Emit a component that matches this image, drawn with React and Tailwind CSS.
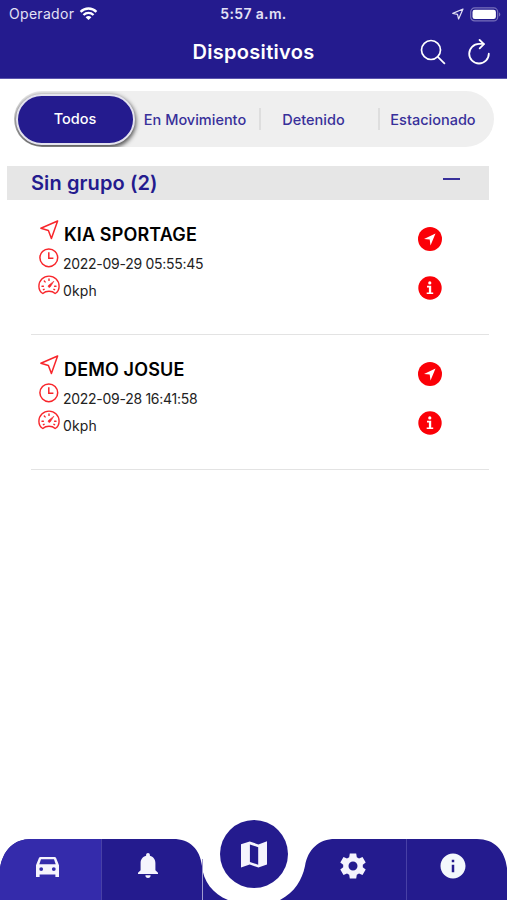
import { useState } from 'react';
import { MdInfo } from 'react-icons/md';

const devices = [
  { id: 1, name: 'KIA SPORTAGE', date: '2022-09-29 05:55:45', speed: '0kph' },
  { id: 2, name: 'DEMO JOSUE', date: '2022-09-28 16:41:58', speed: '0kph' },
];

const tabs = [
  { label: 'Todos', className: 'w-[122px]' },
  { label: 'En Movimiento', className: 'w-[119px] pr-[1px]' },
  { label: 'Detenido', className: 'w-[119px] pr-[2px]' },
  { label: 'Estacionado', className: 'w-[120px] pr-[2px]' },
];

function StatusBar() {
  return (
    <div className="flex h-7 items-center justify-between pl-[9px] pr-[6px] text-sm text-[#e3e1f5]">
      <div className="flex w-[110px] items-center gap-[5px]">
        <span className="text-[14px] tracking-[0.3px]">Operador</span>
        <svg className="h-[14px] w-[19px] shrink-0" viewBox="0 0 19 15" fill="none" stroke="#fff" strokeWidth="2.5">
          <path d="M1 5.2C5.9.4 13.1.4 18 5.2" />
          <path d="M4.1 8.6c3.1-3 7.7-3 10.8 0" />
          <path d="M9.5 14 6.4 10.9c1.8-1.7 4.4-1.7 6.2 0z" fill="#fff" stroke="none" />
        </svg>
      </div>
      <span className="pr-px text-[14px] font-semibold tracking-[0.35px]">5:57 a.m.</span>
      <div className="flex w-[112px] items-center justify-end gap-[6px]">
        <svg className="h-3 w-3" viewBox="0 0 12 12" fill="none" stroke="currentColor" strokeWidth="1.2" strokeLinejoin="round">
          <path d="M11 1 .8 5.4l4.7 1L6.600 11z" />
        </svg>
        <svg className="h-[15px] w-[31px]" viewBox="0 0 31 15">
          <rect x=".7" y=".9" width="27" height="13" rx="4" fill="none" stroke="#7770bb" strokeWidth="1.2" />
          <rect x="2.5" y="2.800" width="23.4" height="9.2" rx="2.3" fill="#fff" />
          <path d="M29 5.2c1.8.8 1.8 3.6 0 4.4z" fill="#7770bb" />
        </svg>
      </div>
    </div>
  );
}

function Header() {
  return (
    <header className="h-[79px] shrink-0 border-b border-[#5c55ad] bg-[#241b8e]">
      <StatusBar />
      <div className="grid h-12 grid-cols-[1fr_auto_1fr] items-center">
        <h1 className="col-start-2 text-[20px] font-semibold tracking-[0.3px] text-white">Dispositivos</h1>
        <div className="flex items-center justify-end gap-[22px] pr-[17px]">
          <svg className="h-[26px] w-[26px]" viewBox="0 0 26 26" fill="none" stroke="#fff" strokeWidth="1.7">
            <circle cx="11" cy="11" r="9.5" />
            <path d="m17.8 17.8 7.1 7" />
          </svg>
          <svg className="h-[26px] w-[22px]" viewBox="0 0 22 26" fill="none" stroke="#fff" strokeWidth="1.8" strokeLinecap="round" strokeLinejoin="round">
            <path d="M20.8 14.7a9.8 9.8 0 1 1-9.8-9.8h4.7" />
            <path d="m11.6 1 4.3 4.2-4.2 4.1" />
          </svg>
        </div>
      </div>
    </header>
  );
}

function Tabs({ active, onChange }) {
  return (
    <div className="ml-[14px] mt-[12px] flex h-[56px] w-[480px] shrink-0 items-center overflow-hidden rounded-full bg-[#efefef]">
      {tabs.map((tab, i) => (
        <button
          key={tab.label}
          onClick={() => onChange(i)}
          className={`relative flex h-full items-center justify-center whitespace-nowrap text-[14.5px] font-medium ${tab.className} ${active === i ? 'text-white' : 'text-[#38309a]'}`}
        >
          {active === i ? (
            <span className="mt-[1px] flex h-[51px] w-[119px] items-center justify-center rounded-full border-2 border-[#e4e3ee] bg-[#241b8e] pb-[1px] shadow-[0px_2px_4px_1px_#555]">
              {tab.label}
            </span>
          ) : (
            <span className="pt-px">{tab.label}</span>
          )}
          {i > 0 && i < 3 && <span className="absolute right-[-6px] top-[17px] h-[22px] w-[2px] bg-[#dedede]" />}
        </button>
      ))}
    </div>
  );
}

function ArrowIcon() {
  return (
    <svg className="h-[20px] w-[19px]" viewBox="0 0 19 20" fill="none" stroke="#f8262b" strokeWidth="1.5" strokeLinejoin="round">
      <path d="M17.6 1 .9 8.2l7.500 2.300 3 8z" />
    </svg>
  );
}

function ClockIcon() {
  return (
    <svg className="h-[20px] w-[20px]" viewBox="0 0 20 20" fill="none" stroke="#f8262b" strokeWidth="1.5">
      <circle cx="9.8" cy="9.8" r="8.9" />
      <path d="M9.8 4.2v6h4.6" />
    </svg>
  );
}

function SpeedIcon() {
  return (
    <svg className="h-[20px] w-[22px]" viewBox="0 0 22 20" fill="none" stroke="#f8262b" strokeWidth="1.4" strokeLinecap="round" strokeLinejoin="round">
      <path d="M4.8 18.5C2.3 17 .9 14.3.9 11.2a10.1 10.1 0 0 1 20.2 0c0 3.1-1.4 5.8-3.9 7.300-3.3-3-9.1-3-12.4 0z" />
      <path d="M11 4v1.400M6.300 6l.8.9M4 11.200h1.400M16.600 11.200H18M5.400 14.700l.7-.4M16.600 14.700l-.7-.4" />
      <path d="m15.7 6.500-3.500 5.600c-1.100 1.100-2.800-.5-1.800-1.600z" fill="#f8262b" strokeWidth=".6" />
    </svg>
  );
}

function DeviceRow({ device }) {
  return (
    <div className="ml-[31px] flex h-[135px] w-[458px] shrink-0 border-b border-[#e3e3e3] pl-[7px] pt-[20px]">
      <div className="flex-1">
        <div className="flex h-[27px] items-start">
          <span className="flex w-[26px] pl-[2px]"><ArrowIcon /></span>
          <span className="pt-[2px] text-[18px] font-semibold leading-[26px] tracking-[0.15px] text-black">{device.name}</span>
        </div>
        <div className="flex h-[27px] items-start">
          <span className="flex w-[25px] pl-px pt-px"><ClockIcon /></span>
          <span className="pt-[6px] text-[14px] leading-[22px] tracking-[-0.28px] text-[#222]">{device.date}</span>
        </div>
        <div className="flex h-[27px] items-start">
          <span className="flex w-[25px] pt-px"><SpeedIcon /></span>
          <span className="pt-[6px] text-[14px] leading-[22px] tracking-[0.15px] text-[#222]">{device.speed}</span>
        </div>
      </div>
      <div className="mr-[47px] flex flex-col gap-[25px] pt-[7px]">
        <svg className="h-6 w-6" viewBox="0 0 24 24">
          <circle cx="12" cy="12" r="12" fill="#fb0007" />
          <path d="M17.5 6.4 6 12l5.7.6.8 5.8z" fill="#fff" />
        </svg>
        <svg className="h-6 w-6" viewBox="0 0 24 24">
          <circle cx="12" cy="12" r="11.7" fill="#fb0007" />
          <circle cx="11.8" cy="6.9" r="1.6" fill="#fff" />
          <path d="M9 9.8h4.2v6.6h2v1.7H8.7v-1.7h2.2v-4.9H9z" fill="#fff" />
        </svg>
      </div>
    </div>
  );
}

function CarIcon() {
  return (
    <svg className="h-[20px] w-[23px]" viewBox="0 0 23 20" fill="#f5f4fd" fillRule="evenodd">
      <path d="M4.500 0h14c.8 0 1.300.4 1.600 1.100L23 8.200V20h-3.600v-2.500H3.600V20H0V8.200l2.900-7.100C3.200.4 3.700 0 4.500 0zM5 2.300 3.300 7.200h16.400L18 2.300zM5.200 10.200a1.900 1.900 0 1 0 0 3.800 1.900 1.900 0 0 0 0-3.800zm12.600 0a1.900 1.900 0 1 0 0 3.800 1.900 1.900 0 0 0 0-3.800z" />
    </svg>
  );
}

function BellIcon() {
  return (
    <svg className="h-[25px] w-[20px]" viewBox="0 0 20 25" fill="#f5f4fd">
      <path d="M10 0c1.100 0 1.900.8 1.900 1.900v.9c3.500.9 5.500 3.800 5.500 7.400v7l2.600 2.500v1.300H0v-1.300l2.600-2.500v-7c0-3.600 2-6.500 5.500-7.400v-.9C8.100.8 8.900 0 10 0zM7.400 22.300h5.200a2.600 2.600 0 0 1-5.200 0z" />
    </svg>
  );
}

function MapIcon() {
  return (
    <svg className="h-[27px] w-[26px]" viewBox="0 0 26 27" fill="#f5f4fd" fillRule="evenodd">
      <path d="M0 3.300 8.700.4l8.700 3L26 .3v23.200l-8.600 3.100-8.700-3L0 26.600zM8.900 3.400v17.500l8.300 2.900V6.300z" />
    </svg>
  );
}

function GearIcon() {
  return (
    <svg className="h-[26px] w-[26px]" viewBox="0 0 26 26" fill="#f5f4fd" fillRule="evenodd">
      <path d="M9.800.5h6.400l.6 3.700 2.200 1.300 3.500-1.400 3.200 5.400-2.900 2.300v2.400l2.900 2.300-3.200 5.400-3.500-1.400-2.200 1.300-.6 3.700H9.800l-.6-3.700L7 20.500l-3.500 1.400L.3 16.500l2.900-2.300v-2.400L.3 9.500l3.200-5.400L7 5.500l2.200-1.300zM13 8.500a4.500 4.500 0 1 0 0 9 4.500 4.500 0 0 0 0-9z" />
    </svg>
  );
}

function BottomNav() {
  return (
    <nav className="relative mt-auto h-[81px] shrink-0">
      <svg className="absolute inset-0 h-full w-full" viewBox="0 0 507 81">
        <path d="M0 81V49C3 31 14 20 31 20h142c17 0 27 10 29 27 1 15 11 28 26 34z" fill="#241b8e" />
        <path d="M0 81V49C3 31 14 20 31 20h70.500v61z" fill="#342bab" />
        <path d="M280 81c15-8 22-20 25-34 3-17 14-27 30-27h142c17 0 28 11 30 29v32z" fill="#241b8e" />
        <path d="M101.500 20v61M406.500 20v61" stroke="#4840a6" />
        <path d="M202.500 40v41" stroke="#a09bd0" />
      </svg>
      <div className="relative flex h-full">
        <button className="flex w-[95px] items-center justify-center pt-[15px]">
          <CarIcon />
        </button>
        <button className="flex w-[105px] items-center justify-center pt-[12px]">
          <BellIcon />
        </button>
        <button className="ml-[20px] mt-[1px] flex h-[68px] w-[68px] items-center justify-center rounded-full bg-[#241b8e]">
          <MapIcon />
        </button>
        <button className="ml-[14px] flex w-[102px] items-center justify-center pt-[12px]">
          <GearIcon />
        </button>
        <button className="flex w-[98px] items-center justify-center pt-[12px]">
          <MdInfo className="h-[30px] w-[30px] text-[#f3f8fc]" />
        </button>
      </div>
    </nav>
  );
}

export default function App() {
  const [active, setActive] = useState(0);
  const [open, setOpen] = useState(true);

  return (
    <div className="flex h-[900px] w-[507px] flex-col overflow-hidden bg-white font-['Inter',sans-serif]">
      <Header />
      <Tabs active={active} onChange={setActive} />
      <button
        onClick={() => setOpen(!open)}
        className="ml-[7px] mt-[19px] flex h-[34px] w-[482px] shrink-0 items-center justify-between bg-[#e6e6e6] pl-[24px] pr-[29px]"
      >
        <span className="text-[20px] font-semibold tracking-[0.1px] text-[#241b8e]">Sin grupo (2)</span>
        <span className="mb-[9px] h-[2px] w-[17px] bg-[#38309a]" />
      </button>
      {open && devices.map(device => <DeviceRow key={device.id} device={device} />)}
      <BottomNav />
    </div>
  );
}
